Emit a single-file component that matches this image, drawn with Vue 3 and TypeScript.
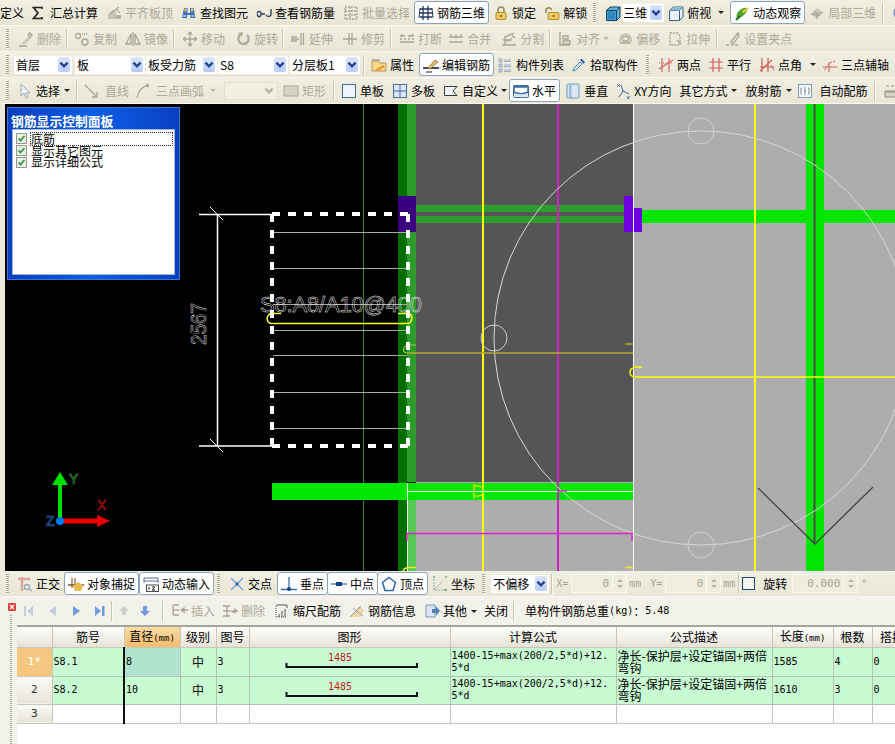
<script setup lang="ts">
interface Item {
  kind: 'btn' | 'sep' | 'grip' | 'caret' | 'combo' | 'field' | 'note'
  icon?: string
  label?: string
  mods?: string
  w?: number
  ml?: number
}

const btn = (icon: string, label: string, mods = '', ml = 0): Item => ({ kind: 'btn', icon, label, mods, ml })
const sep = (ml = 0): Item => ({ kind: 'sep', ml })
const grip = (ml = 0): Item => ({ kind: 'grip', ml })
const caret = (mods = '', ml = 0): Item => ({ kind: 'caret', mods, ml })
const combo = (label: string, w: number, ml = 0, mods = ''): Item => ({ kind: 'combo', label, w, ml, mods })
const field = (label: string, w: number, ml = 0): Item => ({ kind: 'field', label, w, ml })
const note = (label: string, ml = 0, mods = ''): Item => ({ kind: 'note', label, ml, mods })

const G = 'fill="none" stroke="#a9a593" stroke-width="1.3"'
const icons: Record<string, string> = {
  sigma: '<path d="M11 4V2.500H2.500L7 8l-4.500 5.500H11V12" fill="none" stroke="#222" stroke-width="1.700"/>',
  level: `<path d="M2 14V9l5-4 3 2v7z" fill="#c8c5b6"/><path d="M4 9l9-7M11 5l3 3" ${G}/><path d="M10 10h5v4h-5z" fill="#b5b2a2"/>`,
  find: '<path d="M3 3h3.500v5H9V3h3.500l2 10h-5V10H6v3H1z" fill="#3e6fb5"/><path d="M3.500 3.500h2v3h-2zM10 3.500h2v3h-2z" fill="#f0cc55"/><path d="M2 10h3v2H2zM10.500 10h3v2h-3z" fill="#98b8e0"/>',
  glasses: '<path d="M1 8c2-3 5-1 4 2s-4 2-3.500-1M15 4v5c0 3-4 3-5 1M6 9h3" fill="none" stroke="#2e3f5c" stroke-width="1.400"/>',
  batch: `<path d="M2 2h12v12H2zM2 6h12M2 10h12M7 2v12" ${G} stroke-dasharray="2 1"/>`,
  grid3d: '<path d="M2 4h12M1 8h14M2 12h12M5 1v14M10 1v14" fill="none" stroke="#24375f" stroke-width="1.300"/><path d="M2 3l-1 10M14 3l1 10" stroke="#24375f"/>',
  lock: '<path d="M5 8V5a3 3 0 0 1 6 0v3" fill="none" stroke="#9c8752" stroke-width="1.500"/><rect x="3" y="7.500" width="10" height="7" rx="1" fill="#eec85f" stroke="#b09030"/><path d="M8 10v2" stroke="#7b6220" stroke-width="1.500"/>',
  unlock: '<path d="M2 8V5a2.800 2.800 0 0 1 5.500 0" fill="none" stroke="#9c8752" stroke-width="1.500"/><rect x="4" y="7.500" width="11" height="7" rx="1" fill="#eec85f" stroke="#b09030"/><path d="M9.500 10v2" stroke="#7b6220" stroke-width="1.500"/>',
  cube: '<path d="M1.500 5.500L5 2h10v10l-3.500 3.500h-10z" fill="#5fb0d8" stroke="#12405f"/><path d="M1.500 5.500h10v10M11.500 5.500L15 2" fill="none" stroke="#12405f"/><path d="M2.500 6.500h8v8h-8z" fill="#2f88bd"/>',
  cubeo: '<path d="M1.500 5.500L5 2h10v10l-3.500 3.500h-10z" fill="#eaf2f8" stroke="#34607f"/><path d="M1.500 5.500h10v10M11.500 5.500L15 2" fill="none" stroke="#34607f"/><path d="M5 2h10L11.500 5.500h-10z" fill="#8fbcd8"/>',
  orbit: '<path d="M3 13c-2-3 2-9 7-10 3-1 4 1 3 3-2 4-7 8-10 7z" fill="#4aa52e"/><path d="M8 6c2-2 5-3 7-4-1 3-3 5-6 6z" fill="#f0c93a"/><path d="M2 15l4-4" stroke="#207010" stroke-width="2"/>',
  local3d: `<path d="M2 9l6-6 6 4-6 7z" fill="#cfccbd"/><path d="M2 9l6 1 6-3M8 10v4M5 6l6 5" ${G}/>`,
  ring: '<circle cx="8" cy="8" r="6" fill="#f2f5fa" stroke="#6a8cc0" stroke-width="1.300"/><path d="M5 8h4" stroke="#6a8cc0" stroke-width="1.300"/>',
  erase: `<path d="M3 13l8-8 2 2-6 6z" fill="#c9c6b6"/><path d="M12 2l2 2-2 2-2-2zM1 15h8" ${G}/>`,
  copy: `<circle cx="4" cy="5" r="2.500" ${G}/><circle cx="11" cy="11" r="3" ${G}/><path d="M8 3h5M13 3l-1-1" ${G} stroke-dasharray="1 1"/>`,
  mirror: `<path d="M8 1v14" ${G}/><path d="M6 3v10H1zM10 3v10h5z" ${G}/>`,
  move: `<path d="M8 1v14M1 8h14M8 1L6 3.500M8 1l2 2.500M8 15l-2-2.500M8 15l2-2.500M1 8l2.500-2M1 8l2.500 2M15 8l-2.500-2M15 8l-2.500 2" ${G}/>`,
  rotate: '<path d="M12 4A5.200 5.200 0 1 1 6 3.300" fill="none" stroke="#aeab9b" stroke-width="2.400"/><path d="M3 2l5-1-1 5z" fill="#aeab9b"/>',
  extend: `<path d="M1 8h8M1 6h6M1 10h6M11 2v12M13.500 2v12" ${G}/>`,
  trim: `<path d="M1 8h14M7 2v12M10 2v12" ${G}/>`,
  cut: `<path d="M1 5h5M9 5h6M1 11h14M3 5V3M13 5V3" ${G}/><path d="M1 8h14" ${G} stroke-dasharray="2 2"/>`,
  merge: `<path d="M1 6h14M1 11h14M3 6V3M13 6V3M8 3v3" ${G}/>`,
  split: `<path d="M1 14h14M2 9h9M4 14V6l9-4M11 4l3 3" ${G}/><path d="M6 11l6-5" ${G} stroke-dasharray="1 1"/>`,
  align: `<path d="M3 1v14M3 14h10M6 5h5v3H6zM6 10h7v3H6z" ${G}/>`,
  offset: `<path d="M4 12a5.500 5.500 0 1 1 9 0z" ${G}/><path d="M6 10a3 3 0 1 1 5 0z" ${G}/>`,
  stretch: `<path d="M3 2h7l3 3v9H3z" ${G} stroke-dasharray="2 1"/><path d="M10 9l4 4" ${G}/>`,
  grips: `<path d="M13 2L6 11l2 2 6-8zM1 14h3M6 14h2M10 14h3" ${G}/>`,
  prop: '<path d="M1 4h6l2 2h6v8H1z" fill="#f5d88a" stroke="#b8975a"/><path d="M4 13l8-5 2 2-7 4z" fill="#e89b30"/><path d="M1 3h8" stroke="#8d8672"/>',
  edit: '<path d="M0 11h16" stroke="#222" stroke-width="1.600"/><path d="M5 11l7-8 3 2-8 7z" fill="#e9b96a" stroke="#8a5a20" stroke-width=".7"/><path d="M3 15h6" stroke="#222"/>',
  list: '<path d="M2 2h3v3H2zM2 7h3v3H2zM2 12h3v3H2z" fill="#cfd9e6" stroke="#7d8ea8" stroke-width=".7"/><path d="M7 3h7M7 4.500h7M7 8h7M7 9.500h7M7 13h7M7 14.500h7" stroke="#9fb0c8"/>',
  picker: '<path d="M2 14l1-3 6-6 2 2-6 6z" fill="#d8ecf6" stroke="#4f7ea8"/><path d="M9 3l1.500-1.500 3.500 3.500L12.500 7z" fill="#2f6ea8"/>',
  twopt: '<path d="M4 1v14M11 1v14M1 12L15 3" fill="none" stroke="#d0605a" stroke-width="1.100"/><path d="M1 6h14" stroke="#d0605a" stroke-dasharray="1 1"/>',
  para: '<path d="M5 1v14M11 1v14M1 5h14M1 11h14" fill="none" stroke="#d0605a" stroke-width="1.200"/>',
  angle: '<path d="M3 1v14M9 1v14M1 10h14M1 14L13 3" fill="none" stroke="#d0605a" stroke-width="1.200"/><path d="M12 8l3 5" stroke="#d0605a"/>',
  arcaxis: '<path d="M7 15V5M1 10h14" stroke="#d0605a" fill="none"/><path d="M3 13c1-4 4-7 10-9" fill="none" stroke="#d0605a" stroke-dasharray="2 1"/>',
  cursor: '<path d="M4 1v12l3-3 2 5 2-1-2-4h4z" fill="#f0f0f0" stroke="#8d97b5" stroke-width=".8"/>',
  line: `<path d="M2 2l12 12M14 9v5H9" ${G}/>`,
  arc: `<path d="M3 15C4 8 8 4 14 2" ${G} stroke-width="2"/><path d="M12 1h3v3h-3z" fill="#aca899"/>`,
  rect: '<rect x="1" y="3" width="14" height="10" fill="#d6d3c6" stroke="#aca899"/>',
  single: '<rect x="1.500" y="1.500" width="13" height="13" fill="#eef4fa" stroke="#3f6f9f"/>',
  multi: '<rect x="1.500" y="1.500" width="13" height="13" fill="#dce8f4" stroke="#3f6f9f"/><path d="M8 1.500v13M1.500 8h13" stroke="#3f6f9f"/>',
  custom: '<path d="M1.500 3.500H14L10 8l4 4.500H1.500z" fill="#eef3f7" stroke="#3b3b3b"/>',
  horiz: '<rect x=".5" y="2.500" width="15" height="12" rx="1" fill="#dbe7f3" stroke="#3f6f9f"/><path d="M1 4h14v5c-4 2-10 2-14 0z" fill="#fff" stroke="#3f6f9f" stroke-width="1.500"/><path d="M1 3h14" stroke="#3f6f9f" stroke-width="2"/>',
  vert: '<rect x="2" y="1" width="12" height="14" rx="1" fill="#dbe7f3" stroke="#6f97bf"/><path d="M4 2h3c-1 4-1 9 0 12H4z" fill="#9dbedd"/>',
  xydir: '<path d="M4 14l4-6M8 8l6 3M8 8L6 2" fill="none" stroke="#39648f"/><path d="M2 1l3 3M5 1L2 4M12 13l2 3M15 13l-3 3" stroke="#39648f" stroke-width=".8"/>',
  auto: '<rect x="1.500" y="1.500" width="13" height="13" fill="#f6f8fa" stroke="#7c9ab8"/><path d="M5 5H4v6h1M11 5h1v6h-1M8 4v8M7 8h2" fill="none" stroke="#7c8ea0"/>',
  ruler: '<path d="M1 8h14v6H1z" fill="#d7d4c5" stroke="#8d8a78"/><path d="M3 8v2M5 8v2M7 8v2M9 8v2M11 8v2M13 8v2M2 3h3M7 3h3M12 3h2" stroke="#8d8a78"/>',
  ortho: '<path d="M1 3h12M5 1v14" stroke="#d9a79e" stroke-width="2.500"/><circle cx="10" cy="11" r="2.500" fill="none" stroke="#9aa9ba" stroke-width="1.300"/><path d="M12 13l3 2" stroke="#9aa9ba" stroke-width="1.500"/>',
  snap: '<path d="M0 9h16" stroke="#7a4020" stroke-width="1.400"/><path d="M4 2v10M7 2v10" stroke="#7a4020"/><path d="M5 10l5-4 5 3-2 6H7z" fill="#e6bb4e"/>',
  dyn: '<path d="M1 2h14M1 5h14" stroke="#5c6f88"/><rect x="3.500" y="9" width="12" height="6.500" fill="#fff" stroke="#4a4a4a"/><path d="M1 2v5M15 2v5" stroke="#5c6f88"/><path d="M6 11v3M9 11h3l-3 3h3" stroke="#222" fill="none"/>',
  cross: '<path d="M2 2l12 12M14 2L2 14" stroke="#7daadd" stroke-width="1.600"/><circle cx="8" cy="8" r="1.800" fill="#3d6ea8"/>',
  perp: '<path d="M0 13.500h16M8 1v13" stroke="#3d6ea8" stroke-width="1.300"/><circle cx="8" cy="13" r="2" fill="#123f80"/>',
  mid: '<path d="M0 8h16" stroke="#3d6ea8" stroke-width="1.300"/><rect x="5" y="6" width="6" height="4" fill="#123f80"/>',
  vertex: '<path d="M8 1.500l6.500 5-2.500 8H4l-2.500-8z" fill="#fff" stroke="#2f66a8" stroke-width="1.500"/>',
  coord: '<path d="M2 3v11h12M2 14l9-9" fill="none" stroke="#8aa4b8" stroke-dasharray="2 1"/><path d="M1 1h2M13 1h2M12 14h3" stroke="#4c7a4c"/>',
  closeX: '<rect x="7" y="0" width="8" height="8" rx="1" fill="#d9453a"/><path d="M9 2l4 4M13 2L9 6" stroke="#fff" stroke-width="1.200"/>',
  navFirst: '<path d="M4 3h2v10H4zM13 3v10L7 8z" fill="#c4ccd8"/>',
  navPrev: '<path d="M12 3v10L5 8z" fill="#c4ccd8"/>',
  navNext: '<path d="M5 3v10l7-5z" fill="#6d9de0"/>',
  navLast: '<path d="M3 3v10l6-5zM10 3h2.500v10H10z" fill="#6d9de0"/>',
  up: '<path d="M8 3l5 5h-3v4H6V8H3z" fill="#cfcfc9"/>',
  down: '<path d="M6 3h4v5h3l-5 5-5-5h3z" fill="#6d9de0"/>',
  insert: `<path d="M1 2h6M1 7h6M1 12h6M1 2v10" ${G}/><path d="M9 7h7M9 7l3-2v4z" ${G}/>`,
  remove: `<path d="M1 3h7M1 8h7M1 13h7M5 3v10" ${G}/><path d="M9 8h6l-2-2v4z" ${G}/>`,
  scale: '<path d="M2 3v11h11" fill="none" stroke="#555" stroke-dasharray="1 1"/><path d="M2 2h11M13 2v3M5 14v-3M8 14V8M11 14V6" stroke="#555"/>',
  info: '<path d="M1 14l9-11 5 4-3 7z" fill="#f1d6a6"/><path d="M1 14L12 3M4 5l10 8" stroke="#8aa0b8" fill="none"/>',
  other: '<path d="M2 2h9v12H2z" fill="#dbe6f3" stroke="#8299b8"/><path d="M8 6h4V3l4 5-4 5v-3H8z" fill="#4f81bd"/>',
}

const rows: { id: string; items: Item[] }[] = [
  {
    id: 'main',
    items: [
      note('定义', 0, 'big'),
      btn('sigma', '汇总计算'),
      btn('level', '平齐板顶', 'dis'),
      btn('find', '查找图元'),
      btn('glasses', '查看钢筋量'),
      btn('batch', '批量选择', 'dis'),
      btn('grid3d', '钢筋三维', 'on'),
      btn('lock', '锁定'),
      btn('unlock', '解锁'),
      grip(2),
      btn('cube', '', 'tight', 2),
      combo('三维', 41, 2, 'mini'),
      btn('cubeo', '俯视'),
      caret('', 3),
      btn('orbit', '动态观察', 'on', 2),
      btn('local3d', '局部三维', 'dis'),
      sep(2),
      btn('ring', '', '', 2),
    ],
  },
  {
    id: 'edit',
    items: [
      grip(),
      btn('erase', '删除', 'dis', 2),
      sep(1),
      btn('copy', '复制', 'dis'),
      btn('mirror', '镜像', 'dis'),
      sep(1),
      btn('move', '移动', 'dis', 1),
      btn('rotate', '旋转', 'dis', 2),
      sep(),
      btn('extend', '延伸', 'dis'),
      btn('trim', '修剪', 'dis', 1),
      sep(1),
      btn('cut', '打断', 'dis', 1),
      btn('merge', '合并', 'dis', -2),
      btn('split', '分割', 'dis', 2),
      sep(1),
      btn('align', '对齐', 'dis'),
      caret('dis', -1),
      btn('offset', '偏移', 'dis'),
      btn('stretch', '拉伸', 'dis', -1),
      sep(2),
      btn('grips', '设置夹点', 'dis', 1),
    ],
  },
  {
    id: 'member',
    items: [
      grip(),
      combo('首层', 58, 2),
      combo('板', 70, 3),
      combo('板受力筋', 71, 1),
      combo('S8', 70, 1),
      combo('分层板1', 70, 2),
      sep(3),
      btn('prop', '属性'),
      btn('edit', '编辑钢筋', 'on', 1),
      btn('list', '构件列表', '', -1),
      btn('picker', '拾取构件', '', -1),
      grip(4),
      btn('twopt', '两点', '', 2),
      btn('para', '平行', '', -1),
      btn('angle', '点角'),
      caret('', 4),
      btn('arcaxis', '三点辅轴', '', -2),
    ],
  },
  {
    id: 'draw',
    items: [
      grip(),
      btn('cursor', '选择', '', 1),
      caret(),
      sep(2),
      btn('line', '直线', 'dis wide', -1),
      btn('arc', '三点画弧', 'dis wide', -3),
      caret('dis', 2),
      combo('', 54, 4, 'off'),
      btn('rect', '矩形', 'dis', 1),
      sep(3),
      btn('single', '单板'),
      btn('multi', '多板'),
      btn('custom', '自定义'),
      caret('', -1),
      btn('horiz', '水平', 'on', -2),
      btn('vert', '垂直', '', 1),
      btn('xydir', 'XY方向', '', -1),
      note('其它方式', 4),
      caret('', 2),
      note('放射筋', 4),
      caret('', 3),
      btn('auto', '自动配筋', 'wide', -3),
      sep(3),
      btn('ruler', '', '', 2),
    ],
  },
  {
    id: 'snap',
    items: [
      grip(),
      btn('ortho', '正交', 'dis dark', 1),
      btn('snap', '对象捕捉', 'on'),
      btn('dyn', '动态输入', 'on'),
      grip(3),
      btn('cross', '交点', '', 2),
      btn('perp', '垂点', 'on', 1),
      btn('mid', '中点', 'on', -1),
      btn('vertex', '顶点', 'on', -1),
      btn('coord', '坐标'),
      grip(3),
      combo('不偏移', 58, 3),
      sep(2),
      note('X=', 1, 'fade'),
      field('0', 56, 1),
      note('mm', 2, 'fade'),
      note('Y=', 7, 'fade'),
      field('0', 56, 1),
      note('mm', 2, 'fade'),
      sep(1),
      { kind: 'btn', icon: 'check', label: '', mods: 'box' },
      note('旋转', 8),
      field('0.000', 66, 3),
      note('°', 3, 'fade'),
    ],
  },
  {
    id: 'grid',
    items: [
      btn('closeX', '', 'nav', -8),
      btn('navFirst', '', 'nav', -3),
      btn('navPrev', '', 'nav', 2),
      btn('navNext', '', 'nav', 2),
      btn('navLast', '', 'nav', 2),
      sep(),
      btn('up', '', 'nav', -2),
      btn('down', '', 'nav', -1),
      sep(6),
      btn('insert', '插入', 'dis', 2),
      btn('remove', '删除', 'dis', -1),
      btn('scale', '缩尺配筋', '', 1),
      btn('info', '钢筋信息'),
      btn('other', '其他'),
      caret(),
      note('关闭', 3),
      sep(3),
      note('单构件钢筋总重', 8, 'flush'),
      note('(kg)', 0, 'mono'),
      note('：', 0, 'flush'),
      note('5.48', 0, 'mono'),
    ],
  },
]

const columns = [
  { title: '', width: 35 },
  { title: '筋号', width: 72 },
  { title: '直径', unit: '(mm)', width: 56, on: true },
  { title: '级别', width: 36 },
  { title: '图号', width: 33 },
  { title: '图形', width: 201 },
  { title: '计算公式', width: 166 },
  { title: '公式描述', width: 156 },
  { title: '长度', unit: '(mm)', width: 61 },
  { title: '根数', width: 39 },
  { title: '搭接', width: 40 },
]

const bars = [
  { no: '1*', name: 'S8.1', dia: '8', len: '1585', count: '4', active: true },
  { no: '2', name: 'S8.2', dia: '10', len: '1610', count: '3', active: false },
]

const panelItems = ['底筋', '显示其它图元', '显示详细公式']
const rungs = [232, 268, 304, 330, 355, 392, 428]
const rebarDash = 'M272 214V446M408 214V446M272 214H408M272 446H408'
</script>

<template>
  <div class="app">
    <template v-for="row in rows" :key="row.id">
      <div class="bar" :class="`bar-${row.id}`">
        <template v-for="(it, i) in row.items" :key="i">
          <span
            v-if="it.kind === 'btn'"
            class="btn"
            :class="it.mods"
            :style="it.ml ? { marginLeft: `${it.ml}px` } : undefined"
          >
            <svg v-if="it.icon !== 'check'" class="ico" viewBox="0 0 16 16" v-html="icons[it.icon as string]"></svg>
            <span v-if="it.label">{{ it.label }}</span>
          </span>
          <span v-else-if="it.kind === 'sep'" class="sep" :style="{ marginLeft: `${it.ml}px` }"></span>
          <span v-else-if="it.kind === 'grip'" class="grip" :style="{ marginLeft: `${it.ml}px` }"></span>
          <span v-else-if="it.kind === 'caret'" class="caret" :class="it.mods" :style="{ marginLeft: `${it.ml}px` }"></span>
          <span v-else-if="it.kind === 'note'" class="note" :class="it.mods" :style="{ marginLeft: `${it.ml}px` }">{{ it.label }}</span>
          <span
            v-else-if="it.kind === 'combo'"
            class="combo"
            :class="it.mods"
            :style="{ width: `${it.w}px`, marginLeft: `${it.ml}px` }"
          >
            <span>{{ it.label }}</span>
            <span class="combo-arrow"><svg viewBox="0 0 10 10"><path d="M2 3.500L5 6.500 8 3.500" fill="none" stroke="currentColor" stroke-width="2" /></svg></span>
          </span>
          <span v-else class="field" :style="{ width: `${it.w}px`, marginLeft: `${it.ml}px` }">
            <span class="field-value">{{ it.label }}</span>
            <span class="spin"><i class="spin-up"></i><i class="spin-down"></i></span>
          </span>
        </template>
      </div>

      <div v-if="row.id === 'draw'" class="canvas">
        <svg class="scene" viewBox="5 104 890 467" width="890" height="467">
          <rect x="5" y="104" width="890" height="467" fill="#000" />
          <rect x="416" y="104" width="217" height="378" fill="#555" />
          <rect x="416" y="482" width="217" height="89" fill="#adadad" />
          <rect x="633" y="104" width="262" height="467" fill="#adadad" />

          <rect x="398" y="104" width="9" height="467" fill="#006f00" />
          <rect x="407" y="104" width="9" height="378" fill="#2d9c2d" />
          <rect x="407" y="500" width="9" height="71" fill="#57c957" />
          <path d="M363.500 104V571" stroke="#2a8a2a" />
          <rect x="398" y="196" width="18" height="36" fill="#3a0080" />
          <rect x="416" y="205" width="208" height="7" fill="#2d9c2d" />
          <rect x="416" y="216" width="208" height="7" fill="#2d9c2d" />
          <rect x="624" y="196" width="9" height="36" fill="#7000e0" />
          <rect x="634" y="208" width="8" height="24" fill="#7000e0" />
          <rect x="642" y="210" width="253" height="13" fill="#00e600" />
          <rect x="806" y="104" width="18" height="467" fill="#00e600" />
          <rect x="272" y="483" width="361" height="17" fill="#00e600" />
          <path d="M814.500 104V544" stroke="#4a4a4a" stroke-width="2" />

          <path d="M483 104V571M755 104V571" stroke="#ffff00" stroke-width="2" />
          <path d="M558 104V571" stroke="#d020c0" stroke-width="2" />
          <path d="M633.500 104V571" stroke="#fff" />
          <path d="M407.500 483V571M407 491.500H633" stroke="#e8ffe8" />

          <circle cx="701" cy="338" r="207" fill="none" stroke="#d8d8d8" />
          <circle cx="701" cy="131" r="13" fill="none" stroke="#d0d0d0" />
          <circle cx="494" cy="338" r="13" fill="none" stroke="#d0d0d0" />
          <circle cx="701" cy="545" r="13" fill="none" stroke="#d0d0d0" />

          <path d="M407 353H633" stroke="#b0a830" stroke-width="1.500" />
          <path d="M625 344H633" stroke="#b0a830" stroke-width="1.500" />
          <path d="M642 367H636C628 368 628 377 636 377H895" fill="none" stroke="#ffff00" stroke-width="1.500" />
          <path d="M416 345H408C402 347 402 353 408 353" fill="none" stroke="#a8c830" stroke-width="1.200" />
          <path d="M407 541V533.500H632V541" fill="none" stroke="#e020d0" stroke-width="1.500" />
          <path d="M625 567.500H633M416 567.500H408C404 568 403 571 403 571" fill="none" stroke="#e6e630" stroke-width="1.500" />
          <path d="M474 484V499M474 486H479C485 487 485 495 479 496H474" fill="none" stroke="#c8e000" stroke-width="1.500" />
          <path d="M558 491H567" stroke="#e020d0" stroke-width="1.500" />
          <path d="M758 488L815 544 873 487" fill="none" stroke="#444" stroke-width="1.300" />

          <path v-for="y in rungs" :key="y" :d="`M273 ${y}.5H407`" stroke="#a8a8a8" />
          <path d="M281 313.500H270C266 317 266 322 271 323.500H409C413 320 413 316 409 313.500H398" fill="none" stroke="#ffff20" stroke-width="1.500" />

          <path d="M199 214.500H272M199 446H272M217.500 214V446" stroke="#fff" stroke-width="1.500" fill="none" />
          <path d="M210 207L223 220M210 439L223 452" stroke="#fff" />
          <path :d="rebarDash" fill="none" stroke="#fff" stroke-width="4" stroke-dasharray="8 8" />

          <text class="cad" x="260" y="311.500" textLength="162" font-size="22">S8:A8/A10@400</text>
          <text class="cad" transform="translate(206 345) rotate(-90)" textLength="42" lengthAdjust="spacingAndGlyphs" font-size="22">2567</text>

          <path d="M60 521V482" stroke="#00e000" stroke-width="4" />
          <path d="M60 472L52 485H68Z" fill="#00e000" />
          <path d="M60 521H98" stroke="#ee0000" stroke-width="5" />
          <path d="M110 521L97 515V527Z" fill="#ee0000" />
          <circle cx="60" cy="521" r="4" fill="#0a78f0" />
          <text class="axis" x="69" y="484" stroke="#3fa83f">Y</text>
          <text class="axis" x="97" y="510" stroke="#c81010">X</text>
          <text class="axis" x="46" y="526" stroke="#2a70c8">Z</text>
        </svg>

        <div class="panel">
          <div class="panel-title">钢筋显示控制面板</div>
          <ul class="panel-list">
            <li v-for="(p, i) in panelItems" :key="p" class="panel-row">
              <svg class="panel-check" viewBox="0 0 11 11">
                <rect x=".5" y=".5" width="10" height="10" fill="#e6f2e6" stroke="#9a9a8c" />
                <path d="M2.500 5.500L4.500 7.500 8.500 3" fill="none" stroke="#2f8f3f" stroke-width="1.600" />
              </svg>
              <span class="panel-label" :class="{ focus: i === 0 }">{{ p }}</span>
            </li>
          </ul>
        </div>
      </div>
    </template>

    <div class="sheet">
      <div class="sheet-grip"></div>
      <table class="grid">
        <colgroup>
          <col v-for="c in columns" :key="c.title" :style="{ width: `${c.width}px` }" />
        </colgroup>
        <thead>
          <tr>
            <th v-for="c in columns" :key="c.title" :class="{ on: c.on }">
              {{ c.title }}<small v-if="c.unit">{{ c.unit }}</small>
            </th>
          </tr>
        </thead>
        <tbody>
          <tr v-for="b in bars" :key="b.no" class="filled">
            <th class="no" :class="{ on: b.active }">{{ b.no }}</th>
            <td class="latin">{{ b.name }}</td>
            <td class="latin dia" :class="{ cur: b.active }">{{ b.dia }}</td>
            <td class="mid">中</td>
            <td class="latin">3</td>
            <td class="shape">
              <svg width="200" height="27" viewBox="0 0 200 27">
                <text x="89" y="13" text-anchor="middle" class="dim">1485</text>
                <path d="M35.500 15V19H166V15" fill="none" stroke="#111" stroke-width="2" />
              </svg>
            </td>
            <td class="latin lines">1400-15+max(200/2,5*d)+12.<br />5*d</td>
            <td class="lines desc">净长-保护层+设定锚固+两倍<br />弯钩</td>
            <td class="latin">{{ b.len }}</td>
            <td class="latin">{{ b.count }}</td>
            <td class="latin">0</td>
          </tr>
          <tr class="blank">
            <th class="no">3</th>
            <td v-for="n in 10" :key="n" :class="{ dia: n === 2 }"></td>
          </tr>
        </tbody>
      </table>
    </div>
  </div>
</template>

<style scoped>
.app {
  width: 895px;
  height: 744px;
  display: flex;
  flex-direction: column;
  overflow: hidden;
  background: #ece9d8;
  color: #000;
  font-family: "Noto Sans CJK SC", "Liberation Sans", sans-serif;
  font-size: 12px;
  line-height: 14px;
}

.bar {
  flex: none;
  height: 26px;
  display: flex;
  align-items: center;
  padding-left: 6px;
  white-space: nowrap;
  background: linear-gradient(#f1efe3, #e9e6d5);
  border-bottom: 1px solid #f8f7f0;
  box-sizing: border-box;
}

.bar-main {
  padding-left: 0;
}

.bar-grid {
  height: 30px;
  background: #f3f2ea;
  border-bottom: 2px solid #a5a59c;
}

.btn {
  flex: none;
  display: inline-flex;
  align-items: center;
  gap: 3px;
  padding: 0 4px;
  height: 22px;
  box-sizing: border-box;
}

.btn.dis {
  color: #aca899;
}

.btn.dark {
  color: #000;
}

.btn.wide {
  gap: 6px;
}

.btn.tight {
  padding-right: 0;
}

.btn.on {
  height: 23px;
  padding: 0 3px;
  background: #fff;
  border: 1px solid #8ba3bd;
  border-radius: 3px;
}

.btn.nav {
  padding: 0 3px;
}

.btn.box {
  width: 13px;
  height: 13px;
  padding: 0;
  background: #f6f6ee;
  border: 1px solid #1c4a78;
}

.ico {
  flex: none;
  width: 16px;
  height: 16px;
}

.sep {
  flex: none;
  width: 1px;
  height: 20px;
  margin-right: 3px;
  background: #c8c5b2;
  box-shadow: 1px 0 0 #fbfaf3;
}

.grip {
  flex: none;
  width: 3px;
  height: 20px;
  background: repeating-linear-gradient(#a8a594 0 1px, #f6f5ec 1px 2px);
  margin-right: 3px;
}

.caret {
  flex: none;
  width: 0;
  height: 0;
  margin-right: 4px;
  border-left: 3px solid transparent;
  border-right: 3px solid transparent;
  border-top: 3px solid #222;
}

.caret.dis {
  border-top-color: #b8b5a4;
}

.note {
  flex: none;
  padding-right: 2px;
}

.note.big {
  margin-left: -1px;
  margin-right: 1px;
}

.note.fade {
  color: #a5a293;
  font-family: "DejaVu Sans Mono", monospace;
  font-size: 10px;
}

.note.flush {
  padding-right: 0;
}

.note.mono {
  padding-right: 0;
  font-family: "DejaVu Sans Mono", monospace;
  font-size: 10px;
}

.combo {
  flex: none;
  display: inline-flex;
  align-items: center;
  justify-content: space-between;
  height: 18px;
  box-sizing: border-box;
  padding: 0 2px 0 2px;
  background: #fff;
}

.combo.off {
  background: #f1efe2;
  border: 1px solid #e3e0cf;
}

.combo.off .combo-arrow {
  background: #f1efe2;
  color: #b5b2a2;
}

.combo.mini {
  padding-left: 0;
}

.combo-arrow {
  flex: none;
  display: block;
  width: 12px;
  height: 15px;
  border-radius: 2px;
  color: #24448f;
  background: linear-gradient(#dbe5fa, #b8ccf4);
}

.combo-arrow svg {
  display: block;
  width: 12px;
  height: 15px;
}

.field {
  flex: none;
  display: inline-flex;
  height: 19px;
  box-sizing: border-box;
  background: #efedde;
  border: 1px solid #faf9f1;
  color: #a5a293;
  font-family: "DejaVu Sans Mono", monospace;
  font-size: 11px;
  line-height: 17px;
}

.field-value {
  flex: 1;
  text-align: right;
  padding-right: 3px;
}

.spin {
  flex: none;
  width: 13px;
  display: flex;
  flex-direction: column;
  align-items: center;
  justify-content: center;
  gap: 3px;
  border-left: 1px solid #faf9f1;
}

.spin i {
  width: 0;
  height: 0;
  border-left: 3px solid transparent;
  border-right: 3px solid transparent;
}

.spin-up {
  border-bottom: 3px solid #b5b2a2;
}

.spin-down {
  border-top: 3px solid #b5b2a2;
}

.canvas {
  flex: none;
  position: relative;
  height: 467px;
  padding-left: 5px;
}

.scene {
  display: block;
}

.cad {
  font-family: "Liberation Sans", sans-serif;
  fill: none;
  stroke: #f0f0f0;
  stroke-width: 0.45;
}

.axis {
  font-family: "Liberation Sans", sans-serif;
  font-size: 14px;
  fill: none;
  stroke-width: 0.6;
}

.panel {
  position: absolute;
  left: 7px;
  top: 3px;
  width: 173px;
  height: 173px;
  box-sizing: border-box;
  padding: 4px 4px 4px;
  display: flex;
  flex-direction: column;
  background: linear-gradient(90deg, #0a3fc0, #0c5fe6 50%, #0a3fc0);
  border: 1px solid #3a76d8;
}

.panel-title {
  height: 17px;
  margin-left: -1px;
  color: #fff;
  font-size: 12.800px;
  font-weight: 700;
  line-height: 17px;
  white-space: nowrap;
}

.panel-list {
  flex: 1;
  margin: 0;
  padding: 3px 0 0 3px;
  list-style: none;
  background: #fff;
  border: 1px solid #9fb6d8;
}

.panel-row {
  display: flex;
  align-items: center;
  gap: 4px;
  height: 11.700px;
}

.panel-check {
  flex: none;
  width: 11px;
  height: 11px;
}

.panel-label {
  flex: 1;
  line-height: 12px;
  white-space: nowrap;
}

.panel-label.focus {
  outline: 1px dotted #333;
  margin-right: 2px;
}

.sheet {
  flex: 1;
  position: relative;
  padding-left: 17px;
  background: #fff;
}

.sheet-grip {
  position: absolute;
  left: 0;
  top: -12px;
  bottom: 0;
  width: 17px;
  background: repeating-linear-gradient(#a8a594 0 1px, #f3f2ea 1px 2px) 10px 0 / 2px 100% no-repeat, #f3f2ea;
}

.grid {
  table-layout: fixed;
  width: 895px;
  border-collapse: collapse;
  font-size: 12px;
  line-height: 12px;
}

.grid th,
.grid td {
  padding: 0 1px;
  border: 1px solid #b4c2b4;
  border-width: 0 1px 1px 0;
  overflow: hidden;
  white-space: nowrap;
  box-sizing: border-box;
}

.grid thead th {
  height: 20px;
  font-weight: 400;
  background: linear-gradient(#fdfdfb, #e6e3d6);
  border-color: #c9c7ba;
}

.grid thead th.on {
  background: linear-gradient(#fbdba5, #f2bd6c);
}

.grid small {
  font-family: "DejaVu Sans Mono", monospace;
  font-size: 9px;
}

.grid .no {
  font-family: "DejaVu Sans Mono", monospace;
  font-size: 11px;
  font-weight: 400;
  color: #333;
  background: linear-gradient(#fbfbf8, #e6e3d6);
  border-color: #c9c7ba;
}

.grid .no.on {
  color: #fff;
  background: #f6c781;
}

.filled td,
.filled th {
  height: 29px;
}

.filled + .filled td,
.filled + .filled th {
  height: 28px;
}

.filled td {
  background: #c9fbd3;
}

.blank td,
.blank th {
  height: 19px;
}

.blank td {
  border-color: #c4c4c4;
}

.latin {
  font-family: "DejaVu Sans Mono", "Noto Sans CJK SC", monospace;
  font-size: 10px;
}

.grid .dia {
  border-left: 2px solid #111;
}

.filled .cur {
  background: #b0e2cd;
}

.mid {
  text-align: center;
}

.shape {
  padding: 0;
}

.shape svg {
  display: block;
}

.dim {
  font-family: "DejaVu Sans Mono", monospace;
  font-size: 10px;
  fill: #c01818;
}

.desc {
  font-size: 12px;
}
</style>

<style>
html,
body {
  margin: 0;
  overflow: hidden;
}
</style>
